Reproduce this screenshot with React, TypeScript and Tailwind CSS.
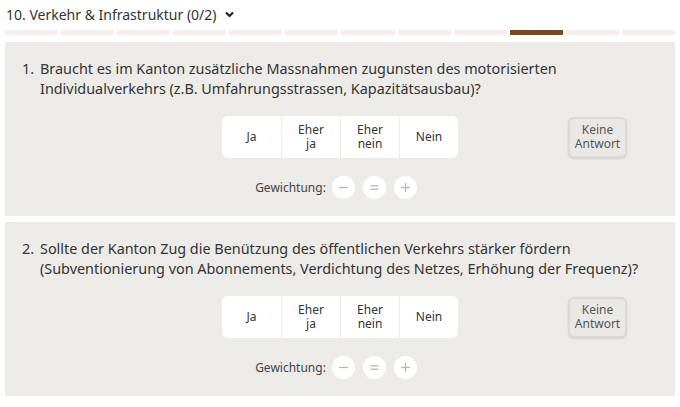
import React from "react";

const font = { fontFamily: '"Noto Sans", "Open Sans", sans-serif' };

function Question({ n, lines }: { n: number; lines: string[] }) {
  return (
    <div className="bg-[#ecebe8] px-3 pt-[17px] pb-[17px]">
      <div className="flex text-[14.4px] leading-[20px] text-[#333]">
        <div className="w-[23px] pl-[5px] shrink-0">{n}.</div>
        <div>
          {lines.map((l, i) => (
            <div key={i} className="whitespace-nowrap">{l}</div>
          ))}
        </div>
      </div>
      <div className="grid grid-cols-[1fr_auto_1fr] items-center mt-[17px]">
        <div />
        <div className="flex bg-white rounded-[6px] h-[42px] text-[12px] leading-[14px] text-[#333]">
          {[["Ja"], ["Eher", "ja"], ["Eher", "nein"], ["Nein"]].map((b, i) => (
            <div
              key={i}
              className={`w-[59px] flex items-center justify-center text-center ${i > 0 ? "border-l border-[#ecebe8]" : ""}`}
            >
              {b.length === 1 ? (
                <span>{b[0]}</span>
              ) : (
                <span>
                  {b[0]}
                  <br />
                  {b[1]}
                </span>
              )}
            </div>
          ))}
        </div>
        <div className="flex justify-end pr-[36px]">
          <div className="w-[59px] h-[41px] rounded-[6px] bg-[#e9e8e5] border-2 border-[#dad9d6] shadow-[0_1px_2px_rgba(0,0,0,0.12)] flex items-center justify-center text-center text-[12px] leading-[14px] text-[#555]">
            <span>
              Keine
              <br />
              Antwort
            </span>
          </div>
        </div>
      </div>
      <div className="flex items-center justify-center mt-[18px] text-[12px] text-[#444] gap-[8px]">
        <span className="ml-[-8px] mr-[-2px]">Gewichtung:</span>
        {["minus", "eq", "plus"].map((k) => (
          <div key={k} className="w-[23px] h-[23px] rounded-full bg-white flex items-center justify-center">
            <svg width="11" height="11" viewBox="0 0 11 11" stroke="#b5b5b5" strokeWidth="1.3" fill="none">
              {k === "minus" && <line x1="1" y1="5.5" x2="10" y2="5.5" />}
              {k === "eq" && (
                <>
                  <line x1="1.5" y1="3.8" x2="9.5" y2="3.8" />
                  <line x1="1.5" y1="7.2" x2="9.5" y2="7.2" />
                </>
              )}
              {k === "plus" && (
                <>
                  <line x1="1" y1="5.5" x2="10" y2="5.5" />
                  <line x1="5.5" y1="1" x2="5.5" y2="10" />
                </>
              )}
            </svg>
          </div>
        ))}
      </div>
    </div>
  );
}

export default function App() {
  return (
    <div className="w-[680px] h-[407px] bg-white overflow-hidden" style={font}>
      <div className="px-[5px]">
        <div className="flex items-center h-[27px] pt-[1px] pl-[1px] text-[14px] text-[#333]">
          <span>10. Verkehr &amp; Infrastruktur (0/2)</span>
          <svg className="ml-[8px]" width="9" height="7" viewBox="0 0 9 7" fill="none" stroke="#222" strokeWidth="2.2">
            <polyline points="1,1.5 4.5,5 8,1.5" />
          </svg>
        </div>
        <div className="flex gap-[3px] mt-[3px] h-[5px]">
          {Array.from({ length: 12 }).map((_, i) => (
            <div key={i} className={`flex-1 ${i === 9 ? "bg-[#7b4a1c]" : "bg-[#f6eeee]"}`} />
          ))}
        </div>
        <div className="mt-[7px] flex flex-col gap-[6px]">
          <Question
            n={1}
            lines={[
              "Braucht es im Kanton zusätzliche Massnahmen zugunsten des motorisierten",
              "Individualverkehrs (z.B. Umfahrungsstrassen, Kapazitätsausbau)?",
            ]}
          />
          <Question
            n={2}
            lines={[
              "Sollte der Kanton Zug die Benützung des öffentlichen Verkehrs stärker fördern",
              "(Subventionierung von Abonnements, Verdichtung des Netzes, Erhöhung der Frequenz)?",
            ]}
          />
        </div>
      </div>
    </div>
  );
}
